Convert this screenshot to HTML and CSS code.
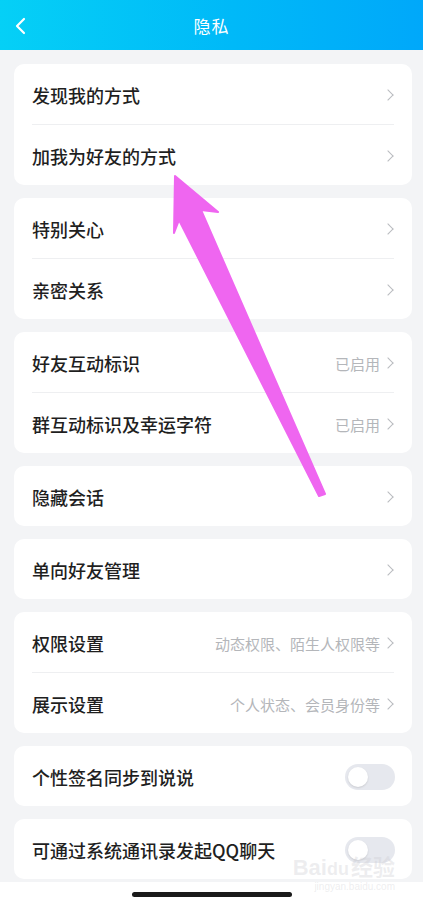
FILE: index.html
```html
<!DOCTYPE html>
<html lang="zh-CN">
<head>
    <meta charset="UTF-8">
    <meta name="viewport" content="width=device-width, initial-scale=1.0">
    <title>隐私</title>
    <link rel="stylesheet" href="styles.css">
</head>
<body>
    <div class="navbar">
        <svg class="back" width="14" height="18" viewBox="0 0 14 18">
            <path d="M10 2 L3 9 L10 16" fill="none" stroke="#fff" stroke-width="2.2" stroke-linecap="round" stroke-linejoin="round"/>
        </svg>
        <span class="title">隐私</span>
    </div>

    <div class="content">
        <div class="card">
            <div class="row"><span class="label">发现我的方式</span><span class="more"></span></div>
            <div class="row"><span class="label">加我为好友的方式</span><span class="more"></span></div>
        </div>

        <div class="card">
            <div class="row"><span class="label">特别关心</span><span class="more"></span></div>
            <div class="row"><span class="label">亲密关系</span><span class="more"></span></div>
        </div>

        <div class="card">
            <div class="row"><span class="label">好友互动标识</span><span class="more">已启用</span></div>
            <div class="row"><span class="label">群互动标识及幸运字符</span><span class="more">已启用</span></div>
        </div>

        <div class="card">
            <div class="row"><span class="label">隐藏会话</span><span class="more"></span></div>
        </div>

        <div class="card">
            <div class="row"><span class="label">单向好友管理</span><span class="more"></span></div>
        </div>

        <div class="card">
            <div class="row"><span class="label">权限设置</span><span class="more">动态权限、陌生人权限等</span></div>
            <div class="row"><span class="label">展示设置</span><span class="more">个人状态、会员身份等</span></div>
        </div>

        <div class="card">
            <div class="row"><span class="label">个性签名同步到说说</span><span class="switch"></span></div>
        </div>

        <div class="card">
            <div class="row"><span class="label">可通过系统通讯录发起QQ聊天</span><span class="switch"></span></div>
        </div>
    </div>

    <div class="home-bar"><span></span></div>

    <!-- 标注箭头 -->
    <svg class="arrow" width="423" height="905" viewBox="0 0 423 905">
        <polygon points="175,176 218,212 201,210 325,494 319,496 179,220 174,233" fill="#ef66f0" stroke="#ef66f0" stroke-width="2" stroke-linejoin="round"/>
    </svg>

    <div class="watermark">
        <span class="wm-logo">Bai<b>du</b>经验</span>
        <span class="wm-url">jingyan.baidu.com</span>
    </div>
</body>
</html>
```

FILE: styles.css
```css
body {
    font-family: "Noto Sans CJK SC", "Noto Sans", sans-serif;
    background-color: #f3f4f6;
    margin: 0;
    padding: 0;
    width: 423px;
    height: 905px;
    position: relative;
    overflow: hidden;
}

.navbar {
    height: 50px;
    display: flex;
    align-items: center;
    justify-content: center;
    position: relative;
    background: linear-gradient(90deg, #05d0f6 0%, #00b9f8 55%, #00a8fa 100%);
    color: white;
}

.navbar .back {
    position: absolute;
    left: 14px;
    top: 17px;
}

.navbar .title {
    font-size: 17px;
    letter-spacing: 1px;
}

.content {
    padding: 14px 11px 0 14px;
    display: flex;
    flex-direction: column;
    gap: 13px;
}

.card {
    background-color: white;
    border-radius: 10px;
    padding: 0 18px;
}

.row {
    box-sizing: border-box;
    height: 60px;
    padding-top: 2px;
    display: flex;
    align-items: center;
    justify-content: space-between;
}

.row + .row {
    height: 61px;
    border-top: 1px solid #eeeff1;
}

.label {
    font-size: 18px;
    font-weight: 500;
    color: #1f1f1f;
}

.more {
    display: flex;
    align-items: center;
    font-size: 15px;
    color: #b4b6ba;
}

/* 右箭头 */
.more::after {
    content: "";
    width: 7px;
    height: 7px;
    border-top: 1.6px solid #b9bbbf;
    border-right: 1.6px solid #b9bbbf;
    transform: rotate(45deg);
    margin-left: 4px;
    margin-right: 2px;
}

.switch {
    width: 50px;
    height: 26px;
    border-radius: 13px;
    background-color: #e6e8ee;
    position: relative;
    margin-right: -1px;
}

.switch::before {
    content: "";
    position: absolute;
    left: 3px;
    top: 3px;
    width: 20px;
    height: 20px;
    border-radius: 50%;
    background-color: white;
    box-shadow: 0 1px 2px rgba(0, 0, 0, 0.12);
}

.home-bar {
    position: absolute;
    left: 0;
    right: 0;
    bottom: 0;
    height: 23px;
    background-color: white;
    display: flex;
    justify-content: center;
}

.home-bar span {
    margin-top: 10px;
    width: 160px;
    height: 5px;
    border-radius: 3px;
    background-color: #1a1a1a;
}

.arrow {
    position: absolute;
    left: 0;
    top: 0;
}

.watermark {
    position: absolute;
    right: 28px;
    bottom: 12px;
    display: flex;
    flex-direction: column;
    align-items: flex-end;
    color: rgba(205, 205, 210, 0.35);
    font-family: "Liberation Sans", "Noto Sans CJK SC", sans-serif;
}

.watermark .wm-logo {
    font-size: 22px;
    font-weight: bold;
    line-height: 24px;
}

.watermark .wm-logo b {
    font-size: 18px;
    margin-right: 2px;
}

.watermark .wm-url {
    font-size: 10px;
    line-height: 12px;
}
```
